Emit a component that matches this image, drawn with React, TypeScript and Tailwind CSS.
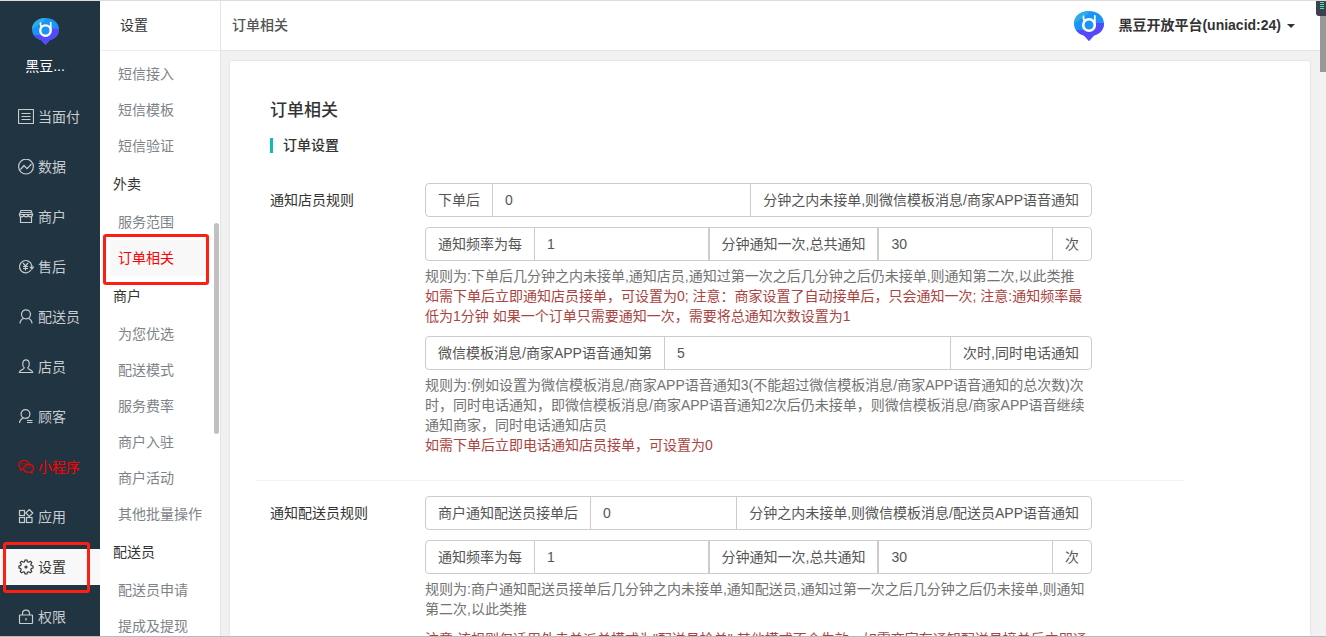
import type { ReactNode } from "react";

type NavItem = { label: string; icon: ReactNode; tone?: "red" | "active" };

const NAV_ITEMS: NavItem[] = [
  {
    label: "当面付",
    icon: (
      <>
        <rect x="0.5" y="0.5" width="15" height="14" rx="0.5" />
        <path d="M3.5 4.5h9M3.5 7.5h9M3.5 10.5h9" />
      </>
    ),
  },
  {
    label: "数据",
    icon: (
      <>
        <circle cx="8" cy="7.6" r="7.4" />
        <path d="M2.5 10.5 6 6.5l3 3.200L13.5 5" />
      </>
    ),
  },
  {
    label: "商户",
    icon: (
      <>
        <path d="M3 1.5h10l1.500 4h-13zM2.5 8v5.500h11V8" />
        <path d="M1.500 5.500c0 3.200 4.300 3.200 4.300 0 0 3.200 4.400 3.200 4.400 0 0 3.200 4.300 3.200 4.300 0M3 3.500h10" />
      </>
    ),
  },
  {
    label: "售后",
    icon: (
      <>
        <path d="M13 11A6.200 6.200 0 1 1 13.800 6.500" />
        <path d="m5 4 2.500 3L10 4M7.500 7v4.500M5 7.500h5M5 9.500h5M11.800 7.500l2 2.500 2-2.500M13.800 6v4" />
      </>
    ),
  },
  {
    label: "配送员",
    icon: (
      <>
        <circle cx="8" cy="5.300" r="4.500" />
        <path d="M2 14.500c0-2.800 1.500-4.300 4-5.300M14 14.500c0-2.800-1.500-4.300-4-5.300" />
      </>
    ),
  },
  {
    label: "店员",
    icon: (
      <path d="M6.200 8.700C4 7.100 4 .8 8 .8s4 6.300 1.800 7.900c0 2.300 4.400 1.500 4.900 4.800H1.300c.5-3.300 4.900-2.500 4.900-4.800z" />
    ),
  },
  {
    label: "顾客",
    icon: (
      <>
        <circle cx="7.500" cy="5" r="4.400" />
        <path d="M1.500 14c.3-2.900 1.700-4.200 4-5.100M8.500 9h2M9 11.500h5.500M9 13.500h5.500" />
      </>
    ),
  },
  {
    label: "小程序",
    tone: "red",
    icon: (
      <>
        <path d="M5.400 10.300 2.500 11.400l.5-2C-.9 6.600 1.200 1.500 6 1.500c2.700 0 4.800 1.500 5 3.800" />
        <path d="M10.200 5.300c6.100 0 6.800 5.400 3.600 7l.3 1.600-2-.8c-7.600 1.100-8.700-7.300-1.900-7.800z" />
        <path d="M4.200 4.300v.8M7.600 4.300v.8M8.700 8.100v.8M12 8.100v.8" />
      </>
    ),
  },
  {
    label: "应用",
    icon: (
      <>
        <rect x="1.500" y="1.500" width="5" height="5" />
        <rect x="1.500" y="8.500" width="5" height="5" />
        <rect x="8.500" y="8.500" width="5.500" height="5" />
        <path d="m11.300.5 3.500 3.500-3.500 3.500L7.800 4z" />
      </>
    ),
  },
  {
    label: "设置",
    tone: "active",
    icon: (
      <>
        <path d="M7 1h2l.4 1.700 1.300.5 1.700-1 1.400 1.400-1 1.700.5 1.300 1.700.4v2l-1.700.4-.5 1.300 1 1.700-1.400 1.400-1.700-1-1.300.5L9 15H7l-.4-1.700-1.300-.5-1.700 1-1.400-1.400 1-1.700-.5-1.300L1 9V7l1.700-.4.5-1.300-1-1.700 1.400-1.400 1.700 1 1.300-.5z" />
        <circle cx="8" cy="8" r="1" />
      </>
    ),
  },
  {
    label: "权限",
    icon: (
      <>
        <rect x="1.500" y="6" width="13" height="8.500" rx="0.500" />
        <path d="M4.500 6V4.500c0-4.600 7-4.600 7 0V6M8 9v2.500" />
      </>
    ),
  },
];

const MENU_GROUPS: { title?: string; items: string[] }[] = [
  { items: ["短信接入", "短信模板", "短信验证"] },
  { title: "外卖", items: ["服务范围", "订单相关"] },
  {
    title: "商户",
    items: ["为您优选", "配送模式", "服务费率", "商户入驻", "商户活动", "其他批量操作"],
  },
  { title: "配送员", items: ["配送员申请", "提成及提现"] },
];

const CURRENT = "订单相关";

function Logo({ className }: { className: string }) {
  return (
    <svg viewBox="0 0 30 30" className={className} aria-hidden="true">
      <path d="M15 0C6.500 0 0 5.300 0 12.500c0 6 4 10.500 10 12L15 30l5-5.500c6-1.500 10-6 10-12C30 5.300 23.500 0 15 0z" fill="#1c93f7" />
      <path d="M15 0C6.500 0 0 5.300 0 12.500L14 3z" fill="#2aaee6" />
      <path d="M30 12c0 6.500-4 11-10 12.500L15 30l-5-5.500c-3.500-.9-6.200-2.800-8-5.500h10l9-7z" fill="#5549fb" />
      <circle cx="15" cy="14" r="5.800" fill="#1c93f7" stroke="#fff" strokeWidth="2.600" />
      <path d="M9.500 5.500v2.300c0 1 .8 1.600 1.800 1.900M20.800 5v9" fill="none" stroke="#fff" strokeWidth="1.800" strokeLinecap="round" />
    </svg>
  );
}

function Sidebar() {
  return (
    <nav className="relative w-[100px] shrink-0 bg-[#213442] text-[14px]">
      <div className="flex h-[98px] flex-col items-center pt-[17px] pr-[10px] text-white">
        <Logo className="size-[27px]" />
        <span className="mt-[11px] leading-[20px]">黑豆...</span>
      </div>
      <ul className="flex flex-col gap-[14px]">
        {NAV_ITEMS.map((item) => (
          <li key={item.label}>
            <a
              href="#"
              className={
                "flex h-[36px] items-center gap-1 pl-[18px] " +
                (item.tone === "active"
                  ? "bg-[#f8f8f8] text-[#333]"
                  : item.tone === "red"
                    ? "text-[#f00]"
                    : "text-[#c8cdd0]")
              }
            >
              <svg
                viewBox="0 0 16 16"
                className="size-4 shrink-0"
                fill="none"
                stroke="currentColor"
                strokeWidth="1.200"
                aria-hidden="true"
              >
                {item.icon}
              </svg>
              {item.label}
            </a>
          </li>
        ))}
      </ul>
      <div className="pointer-events-none absolute top-[541px] left-[3px] h-[51px] w-[87px] rounded-[3px] border-3 border-[#ff1e12]" />
    </nav>
  );
}

function SubMenu() {
  return (
    <aside className="relative w-[121px] shrink-0 border-r border-[#e3e3e3] bg-white text-[14px]">
      <h2 className="flex h-[50px] items-center border-b border-[#eee] pl-5 text-[#333]">设置</h2>
      <div className="pt-[5px] pl-[10px]">
        {MENU_GROUPS.map((group, i) => (
          <div key={i}>
            {group.title && (
              <h3 className="flex h-[40px] items-center pl-[3px] text-[#333]">{group.title}</h3>
            )}
            <ul>
              {group.items.map((item) => (
                <li key={item} className="relative">
                  <a
                    href="#"
                    className={
                      "mr-[13px] flex h-[36px] items-center pl-2 whitespace-nowrap " +
                      (item === CURRENT ? "bg-[#f8f8f8] text-[#f00]" : "text-[#7d8388]")
                    }
                  >
                    {item}
                  </a>
                  {item === CURRENT && (
                    <div className="pointer-events-none absolute -top-[6px] -left-[7px] h-[51px] w-[106px] rounded-[3px] border-3 border-[#ff1e12]" />
                  )}
                </li>
              ))}
            </ul>
          </div>
        ))}
      </div>
      <div className="absolute top-[222px] right-px h-[211px] w-[5px] rounded-full bg-[#c1c1c1]" />
    </aside>
  );
}

function Addon({ children, middle }: { children: ReactNode; middle?: boolean }) {
  return (
    <span
      className={
        "flex shrink-0 items-center border-[#ccc] px-3 whitespace-nowrap " +
        (middle ? "border-x-2" : "first:border-r last:border-l")
      }
    >
      {children}
    </span>
  );
}

function Field({ label, value }: { label: string; value: string }) {
  return (
    <input
      type="text"
      aria-label={label}
      defaultValue={value}
      className="w-0 min-w-0 flex-1 px-3 text-[#555] outline-none"
    />
  );
}

function InputGroup({ children }: { children: ReactNode }) {
  return (
    <div className="flex h-[34px] rounded border border-[#ccc] text-[14px] text-[#555]">
      {children}
    </div>
  );
}

function FrequencyGroup() {
  return (
    <InputGroup>
      <Addon>通知频率为每</Addon>
      <Field label="通知频率" value="1" />
      <Addon middle>分钟通知一次,总共通知</Addon>
      <Field label="总共通知次数" value="30" />
      <Addon>次</Addon>
    </InputGroup>
  );
}

function Help({ children }: { children: ReactNode }) {
  return <p className="mt-[5px] leading-[20px] text-[#737373]">{children}</p>;
}

function FormRow({ title, children }: { title: string; children: ReactNode }) {
  return (
    <fieldset className="-ml-[14px] flex border-b border-[#f1f4f4] pb-[25px] pl-[14px]">
      <legend className="float-left w-[155px] shrink-0 pt-[7px] leading-[20px] text-[#333]">{title}</legend>
      <div className="min-w-0 flex-1 pr-[92px]">{children}</div>
    </fieldset>
  );
}

function SettingsForm() {
  return (
    <form className="max-w-[914px] text-[14px]">
      <h1 className="text-[17px] leading-[24px] font-medium text-[#333]">订单相关</h1>
      <h2 className="mt-[15px] flex h-[15px] items-center border-l-3 border-[#0dbfae] pl-[10px] font-medium text-[#333]">
        订单设置
      </h2>
      <div className="mt-[30px] flex flex-col gap-[15px]">
        <FormRow title="通知店员规则">
          <div className="flex flex-col gap-[10px]">
            <InputGroup>
              <Addon>下单后</Addon>
              <Field label="下单后" value="0" />
              <Addon>分钟之内未接单,则微信模板消息/商家APP语音通知</Addon>
            </InputGroup>
            <div>
              <FrequencyGroup />
              <Help>
                规则为:下单后几分钟之内未接单,通知店员,通知过第一次之后几分钟之后仍未接单,则通知第二次,以此类推
                <br />
                <span className="text-[#a94442]">
                  如需下单后立即通知店员接单，可设置为0; 注意：商家设置了自动接单后，只会通知一次;
                  注意:通知频率最低为1分钟 如果一个订单只需要通知一次，需要将总通知次数设置为1
                </span>
              </Help>
            </div>
            <div>
              <InputGroup>
                <Addon>微信模板消息/商家APP语音通知第</Addon>
                <Field label="语音通知次数" value="5" />
                <Addon>次时,同时电话通知</Addon>
              </InputGroup>
              <Help>
                规则为:例如设置为微信模板消息/商家APP语音通知3(不能超过微信模板消息/商家APP语音通知的总次数)次时，同时电话通知，即微信模板消息/商家APP语音通知2次后仍未接单，则微信模板消息/商家APP语音继续通知商家，同时电话通知店员
                <br />
                <span className="text-[#a94442]">如需下单后立即电话通知店员接单，可设置为0</span>
              </Help>
            </div>
          </div>
        </FormRow>
        <FormRow title="通知配送员规则">
          <div className="flex flex-col gap-[10px]">
            <InputGroup>
              <Addon>商户通知配送员接单后</Addon>
              <Field label="商户通知配送员接单后" value="0" />
              <Addon>分钟之内未接单,则微信模板消息/配送员APP语音通知</Addon>
            </InputGroup>
            <div>
              <FrequencyGroup />
              <Help>
                规则为:商户通知配送员接单后几分钟之内未接单,通知配送员,通知过第一次之后几分钟之后仍未接单,则通知第二次,以此类推
              </Help>
            </div>
            <p className="leading-[20px] text-[#a94442]">
              注意:该规则仅适用外卖单派单模式为"配送员抢单",其他模式不会生效。如需商家在通知配送员接单后立即通知
            </p>
          </div>
        </FormRow>
      </div>
    </form>
  );
}

export default function App() {
  return (
    <div
      lang="zh-CN"
      className="relative flex h-screen overflow-hidden border-t border-b border-t-[#ddd] border-b-[#bbb] bg-[#f1f1f1] font-['Liberation_Sans','Noto_Sans_CJK_SC',sans-serif]"
    >
      <Sidebar />
      <SubMenu />
      <div className="flex min-w-0 flex-1 flex-col">
        <header className="flex h-[50px] shrink-0 items-center justify-between border-b border-[#e3e3e3] bg-white pr-[25px] pl-[11px] text-[14px]">
          <span className="font-medium text-[#555]">订单相关</span>
          <button type="button" className="flex items-center font-bold text-[#333]">
            <Logo className="mr-[14px] size-[30px]" />
            黑豆开放平台(uniacid:24)
            <svg viewBox="0 0 8 4" className="ml-[6px] h-1 w-2" aria-hidden="true">
              <path d="M0 0h8L4 4z" fill="#333" />
            </svg>
          </button>
        </header>
        <main className="mt-[10px] mr-[10px] ml-[9px] min-h-0 flex-1 overflow-hidden rounded-t-[2px] bg-white px-10 pt-[38px] shadow-[0_0_2px_rgba(0,0,0,0.15)]">
          <SettingsForm />
        </main>
      </div>
      <div className="w-[6px] shrink-0 bg-[#f3f3f3]">
        <div className="h-[71px] bg-[#989898]" />
      </div>
      <svg viewBox="0 0 10 16" className="absolute -top-px right-0 h-[16px] w-[10px]" aria-hidden="true">
        <path d="M0 0h10v16H3a3 3 0 0 1-3-3z" fill="#3d404e" />
        <path d="M4 .5h4M4 2.500h4M4 4.500h4M4 6.500h4M4 8.500h4" stroke="#4fe3a0" />
      </svg>
    </div>
  );
}
